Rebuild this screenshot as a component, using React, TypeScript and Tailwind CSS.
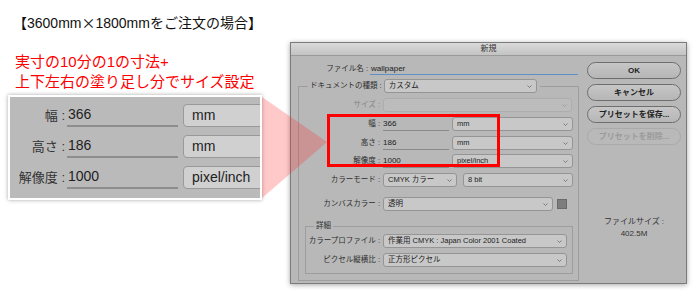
import React from "react";

function Chevron({ color }: { color: string }) {
  return (
    <svg width="5" height="3" viewBox="0 0 5 3" className="shrink-0">
      <path d="M0.5 0.5 L2.5 2.5 L4.5 0.5" stroke={color} fill="none" strokeWidth="0.8" />
    </svg>
  );
}

function Sel({ className, text, disabled }: { className: string; text?: string; disabled?: boolean }) {
  return (
    <div
      className={
        "shrink-0 flex items-center h-[14px] rounded-[3px] border pl-[4px] pr-[4px] " +
        (disabled ? "border-[#adadad] bg-[#bcbcbc] text-[#8c8c8c] " : "border-[#959595] bg-[#c8c8c8] text-[#1c1c1c] ") +
        className
      }
    >
      <span className="flex-1 truncate leading-[12px]">{text}</span>
      <Chevron color={disabled ? "#9a9a9a" : "#6a6a6a"} />
    </div>
  );
}

function Lbl({ className, text, dim }: { className: string; text: string; dim?: boolean }) {
  return (
    <div className={"shrink-0 text-right leading-[14px] whitespace-nowrap " + (dim ? "text-[#858585] " : "text-[#2e2e2e] ") + className}>
      {text}
    </div>
  );
}

function PanelRow({ label, value, unit }: { label: string; value: string; unit: string }) {
  return (
    <div className="flex items-center h-[31px]">
      <div className="shrink-0 w-[55px] text-right text-[13px] text-[#333] whitespace-nowrap">{label}</div>
      <div className="shrink-0 ml-[2px] w-[111px] h-[23px] flex items-center border-b-2 border-[#8d8d8d] pl-[1px] text-[14px] text-[#1e1e1e]">
        {value}
      </div>
      <div className="shrink-0 ml-[5px] w-[95px] h-[23px] flex items-center rounded-[4px] border border-[#999] bg-[#d0d0d0] pl-[8px] text-[14px] text-[#1e1e1e]">
        {unit}
      </div>
    </div>
  );
}

function Btn({ text, disabled }: { text: string; disabled?: boolean }) {
  return (
    <div
      className={
        "h-[17px] rounded-full border flex items-center justify-center font-bold " +
        (disabled
          ? "border-[#aaaaaa] text-[#9b9b9b] bg-[#b9b9b9]"
          : "border-[#6e6e6e] text-[#222] bg-gradient-to-b from-[#c6c6c6] to-[#b6b6b6]")
      }
    >
      {text}
    </div>
  );
}

export default function App() {
  return (
    <div className="relative w-[700px] h-[300px] overflow-hidden bg-white flex [font-family:'Liberation_Sans','Noto_Sans_CJK_JP',sans-serif]">
      {/* left column */}
      <div className="w-[290px] shrink-0 flex flex-col">
        <div className="mt-[12px] pl-[13px] h-[20px] leading-[20px] text-[14px] text-[#111] whitespace-nowrap">
          【3600mm<span className="[font-family:'Noto_Sans_CJK_JP',sans-serif]">×</span>1800mmをご注文の場合】
        </div>
        <div className="mt-[20px] pl-[15px] text-[15px] leading-[20px] text-[#ff0000] whitespace-nowrap">
          <div>実寸の10分の1の寸法+</div>
          <div>上下左右の塗り足し分でサイズ設定</div>
        </div>
        <div className="mt-[3px] ml-[8px] w-[254px] h-[105px] border-2 border-white bg-[#bababa] overflow-hidden shadow-[0_0_4px_rgba(0,0,0,0.35)]">
          <div className="pt-[3px] flex flex-col">
            <PanelRow label="幅 :" value="366" unit="mm" />
            <PanelRow label="高さ :" value="186" unit="mm" />
            <PanelRow label="解像度 :" value="1000" unit="pixel/inch" />
          </div>
        </div>
      </div>

      {/* dialog */}
      <div className="mt-[42px] w-[397px] h-[242px] shrink-0 flex flex-col border border-[#7b7b7b] bg-[#b8b8b8] text-[7.5px] shadow-[0_1px_5px_rgba(0,0,0,0.35)]">
        <div className="h-[13px] shrink-0 flex items-center justify-center border-b border-[#9a9a9a] bg-gradient-to-b from-[#dadada] to-[#c3c3c3] text-[8px] text-[#333]">
          新規
        </div>
        <div className="flex-1 flex">
          {/* left form */}
          <div className="w-[296px] shrink-0 flex flex-col">
            <div className="mt-[6px] h-[14px] flex items-center">
              <Lbl className="w-[77px]" text="ファイル名 :" />
              <div className="shrink-0 ml-[2px] w-[208px] h-[12px] flex items-center border-b border-[#5d8fc9] text-[8px] text-[#1c1c1c] pl-[1px]">
                wallpaper
              </div>
            </div>
            {/* fieldset */}
            <div className="mt-[10px] ml-[7px] w-[281px] h-[195px] border border-[#9d9d9d] flex flex-col">
              <div className="-mt-[8px] h-[14px] flex items-center">
                <div className="shrink-0 ml-[9px] px-[2px] bg-[#b8b8b8] leading-[14px] text-[#2e2e2e] whitespace-nowrap">ドキュメントの種類 :</div>
                <div className="shrink-0 bg-[#b8b8b8] pr-[3px]">
                  <Sel className="w-[153px]" text="カスタム" />
                </div>
              </div>
              <div className="mt-[5px] h-[14px] flex items-center">
                <Lbl className="w-[81px]" text="サイズ :" dim />
                <Sel className="ml-[3px] w-[189px]" disabled />
              </div>
              <div className="mt-[5px] h-[14px] flex items-center">
                <Lbl className="w-[81px]" text="幅 :" />
                <div className="shrink-0 ml-[3px] w-[66px] h-[13px] flex items-center border-b border-[#8a8a8a] text-[8px] text-[#1c1c1c]">366</div>
                <Sel className="ml-[3px] w-[121px]" text="mm" />
              </div>
              <div className="mt-[5px] h-[14px] flex items-center">
                <Lbl className="w-[81px]" text="高さ :" />
                <div className="shrink-0 ml-[3px] w-[66px] h-[13px] flex items-center border-b border-[#8a8a8a] text-[8px] text-[#1c1c1c]">186</div>
                <Sel className="ml-[3px] w-[121px]" text="mm" />
              </div>
              <div className="mt-[4px] h-[14px] flex items-center">
                <Lbl className="w-[81px]" text="解像度 :" />
                <div className="shrink-0 ml-[3px] w-[66px] h-[13px] flex items-center border-b border-[#8a8a8a] text-[8px] text-[#1c1c1c]">1000</div>
                <Sel className="ml-[3px] w-[121px]" text="pixel/inch" />
              </div>
              <div className="mt-[5px] h-[14px] flex items-center">
                <Lbl className="w-[81px]" text="カラーモード :" />
                <Sel className="ml-[3px] w-[74px]" text="CMYK カラー" />
                <Sel className="ml-[6px] w-[110px]" text="8 bit" />
              </div>
              <div className="mt-[10px] h-[14px] flex items-center">
                <Lbl className="w-[81px]" text="カンバスカラー :" />
                <Sel className="ml-[3px] w-[170px]" text="透明" />
                <div className="shrink-0 ml-[4px] w-[10px] h-[10px] bg-[#7d7d7d] border border-[#6a6a6a]" />
              </div>
              {/* detail box */}
              <div className="mt-[15px] ml-[6px] w-[268px] h-[48px] border border-[#9d9d9d] flex flex-col">
                <div className="-mt-[6px] h-[10px] flex items-center">
                  <div className="ml-[8px] px-[2px] bg-[#b8b8b8] leading-[10px] text-[#2e2e2e]">詳細</div>
                </div>
                <div className="mt-[3px] h-[14px] flex items-center">
                  <Lbl className="w-[74px]" text="カラープロファイル :" />
                  <Sel className="ml-[3px] w-[184px]" text="作業用 CMYK : Japan Color 2001 Coated" />
                </div>
                <div className="mt-[5px] h-[14px] flex items-center">
                  <Lbl className="w-[74px]" text="ピクセル縦横比 :" />
                  <Sel className="ml-[3px] w-[184px]" text="正方形ピクセル" />
                </div>
              </div>
            </div>
          </div>
          {/* right column */}
          <div className="w-[94px] shrink-0 flex flex-col">
            <div className="mt-[6px] flex flex-col gap-[5px] text-[8px]">
              <Btn text="OK" />
              <Btn text="キャンセル" />
              <Btn text="プリセットを保存..." />
              <Btn text="プリセットを削除..." disabled />
            </div>
            <div className="mt-[71px] flex flex-col items-center text-[8px] text-[#333]">
              <div className="h-[12px] leading-[12px]">ファイルサイズ :</div>
              <div className="h-[12px] leading-[12px]">402.5M</div>
            </div>
          </div>
        </div>
      </div>

      {/* annotation overlay */}
      <svg className="absolute left-0 top-0 pointer-events-none" width="700" height="300" viewBox="0 0 700 300">
        <polygon points="262,97 327,142 262,198" fill="rgba(255,40,40,0.25)" />
        <rect x="328.5" y="115.5" width="170" height="50" fill="none" stroke="#ff0000" strokeWidth="3" />
      </svg>
    </div>
  );
}
